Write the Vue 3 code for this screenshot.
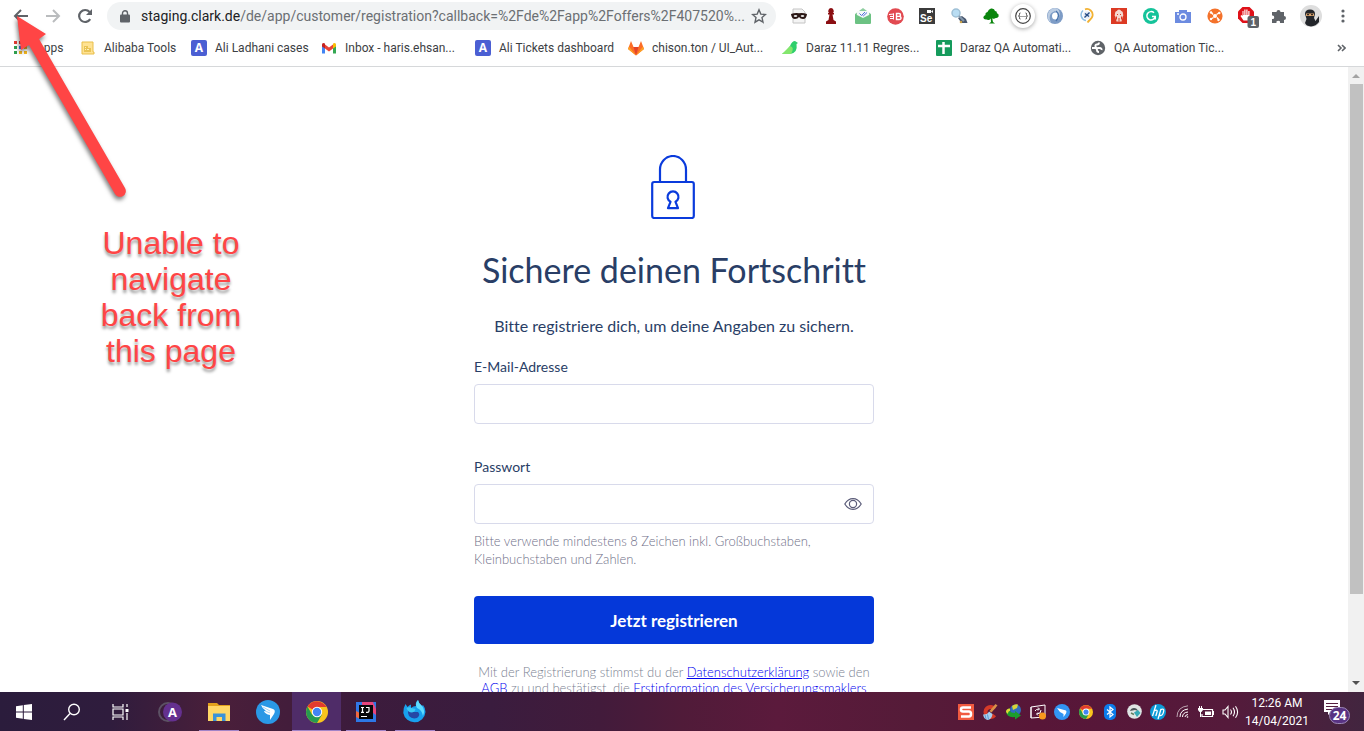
<script setup>
import { ref } from 'vue'

const url = ref('staging.clark.de/de/app/customer/registration?callback=%2Fde%2Fapp%2Foffers%2F407520%...')
const email = ref('')
const password = ref('')
const showPassword = ref(false)

const bookmarks = [
  { icon: 'apps', label: 'Apps' },
  { icon: 'folder', label: 'Alibaba Tools' },
  { icon: 'aqua', label: 'Ali Ladhani cases' },
  { icon: 'gmail', label: 'Inbox - haris.ehsan...' },
  { icon: 'aqua', label: 'Ali Tickets dashboard' },
  { icon: 'gitlab', label: 'chison.ton / UI_Aut...' },
  { icon: 'bird', label: 'Daraz 11.11 Regres...' },
  { icon: 'sheets', label: 'Daraz QA Automati...' },
  { icon: 'globe', label: 'QA Automation Tic...' },
]
</script>

<template>
  <div class="screen">
    <header class="browser">
      <div class="toolbar">
        <button class="slot" type="button" aria-label="Back">
          <svg width="16" height="16" viewBox="0 0 16 16"><path d="M15 8H2M8 2L2 8l6 6" fill="none" stroke="#5f6368" stroke-width="2" /></svg>
        </button>
        <button class="slot" type="button" aria-label="Forward">
          <svg width="16" height="16" viewBox="0 0 16 16"><path d="M1 8h13M8 2l6 6-6 6" fill="none" stroke="#babcbe" stroke-width="2" /></svg>
        </button>
        <button class="slot" type="button" aria-label="Reload">
          <svg width="16" height="16" viewBox="0 0 16 16"><path d="M13.2 11.2A6 6 0 1 1 12.6 4" fill="none" stroke="#5f6368" stroke-width="2.2" /><path d="M15 1v6H9z" fill="#5f6368" /></svg>
        </button>
        <div class="omnibox">
          <svg class="padlock" width="10" height="13" viewBox="0 0 10 13"><path d="M2.5 6V3.3a2.5 2.5 0 0 1 5 0V6" fill="none" stroke="#5f6368" stroke-width="1.4" /><rect y="4.6" width="10" height="8" rx="1" fill="#5f6368" /></svg>
          <div class="address">
            <span class="host">staging.clark.de</span><span>{{ url.slice(16) }}</span>
          </div>
          <button class="star" type="button" aria-label="Bookmark this page">
            <svg width="16" height="16" viewBox="0 0 16 16"><path d="M8 1.8l1.8 4.3 4.7.4-3.5 3.1 1 4.6L8 11.8l-4 2.4 1-4.6-3.500-3.100 4.700-.4z" fill="none" stroke="#5f6368" stroke-width="1.400" /></svg>
          </button>
        </div>
        <div class="extensions">
          <button class="slot" type="button" aria-label="Incognito">
            <svg width="16" height="16" viewBox="0 0 16 16"><path d="M2 1h9l3 3v11H2z" fill="#f4f4f4" stroke="#c4c4c4" /><path d="M0 6q4-1.500 8-.8 4-.7 8 .8-.5 5-4 5-2.800 0-4-2-1.200 2-4 2-3.500 0-4-5z" fill="#2b1715" /><ellipse cx="4.500" cy="8" rx="1.800" ry="1" fill="#e8e8e8" /><ellipse cx="11.500" cy="8" rx="1.800" ry="1" fill="#e8e8e8" /></svg>
          </button>
          <button class="slot" type="button" aria-label="Chess">
            <svg width="16" height="16" viewBox="0 0 16 16"><path d="M8 0a3 3 0 0 1 2 5h1v1.500H9.500L10.500 12 13 13.500V16H3v-2.500L5.500 12l1-5.500H5V5h1a3 3 0 0 1 2-5z" fill="#8b0e12" /></svg>
          </button>
          <button class="slot" type="button" aria-label="Mail tracker">
            <svg width="18" height="16" viewBox="0 0 18 16"><path d="M1 6l8-6 8 6v9H1z" fill="#8fcea0" /><path d="M3 3h12v6l-6 3-6-3z" fill="#f5faf7" /><path d="M1 6l8 4 8-4v8.500q0 1.500-1 1.500H2q-1 0-1-1.500z" fill="#6cc283" /><path d="M5.500 5.500l2 2 3.500-3.500M8.500 7l1 .8L13 4.500" fill="none" stroke="#536bdc" /></svg>
          </button>
          <button class="slot" type="button" aria-label="Block">
            <svg width="17" height="17" viewBox="0 0 17 17"><circle cx="8.500" cy="8.500" r="8.300" fill="#e24a51" /><path d="M2 6.500l5-.5M3 8.500h4M3 10.500h4M6.500 5.500v6" stroke="#fff" stroke-width="1" /><path d="M9.500 5.500h2.500q1.500 0 1.500 1.400T12 8.400q2 0 2 1.600t-2 1.500H9.500zM9.500 8.400H12" fill="none" stroke="#fff" stroke-width="1.400" /></svg>
          </button>
          <button class="slot" type="button" aria-label="Selenium">
            <svg width="16" height="16" viewBox="0 0 16 16"><rect width="16" height="16" fill="#3b3b3b" /><rect x="8" y="2" width="4" height="3" fill="#fff" /><path d="M12 3.500l2-1.500v3z" fill="#fff" /><text x="1" y="14" class="se">Se</text></svg>
          </button>
          <button class="slot" type="button" aria-label="Inspector">
            <svg width="18" height="16" viewBox="0 0 18 16"><path d="M8 10l4-2 4 3 1.500 4h-6z" fill="#48566d" /><circle cx="6" cy="5" r="4" fill="#b9ddf3" stroke="#9fc0d6" stroke-width="1.500" /><path d="M9 8l5 5" stroke="#8398ac" stroke-width="2" /><circle cx="11" cy="14" r="1.300" fill="#c8a14a" /></svg>
          </button>
          <button class="slot" type="button" aria-label="Tree">
            <svg width="16" height="16" viewBox="0 0 16 16"><path d="M8 .5q3.500-.5 4 2.500 2 0 2 2.300 2 .7 1.700 3-.7 2-3 1.700-1.500 1.500-3.500.3L10 14l2 1.500H6L8 14l-.3-3.500Q6 13 4 11.500.5 12 .3 9.500.5 7.500 2.500 7q-.5-2.500 2-3Q5.500 1 8 .5z" fill="#0a850d" /></svg>
          </button>
          <button class="slot" type="button" aria-label="JSON formatter">
            <svg width="28" height="28" viewBox="0 0 28 28" class="raised"><circle cx="14" cy="14" r="12" fill="#fff" /><circle cx="14" cy="14" r="7.300" fill="none" stroke="#444" stroke-width="1.200" /><path d="M11.500 11q-1.500 0-1 1.500 0 1.500-1 1.500 1 0 1 1.500-.5 1.500 1 1.500M16.500 11q1.500 0 1 1.500 0 1.500 1 1.500-1 0-1 1.500.5 1.500-1 1.500" fill="none" stroke="#444" /><path d="M11.500 14.500h5" stroke="#444" stroke-dasharray="1 1" /></svg>
          </button>
          <button class="slot" type="button" aria-label="JSON viewer">
            <svg width="16" height="16" viewBox="0 0 16 16"><circle cx="8" cy="8" r="8" fill="#7d9cc6" /><path d="M8 0a8 8 0 0 0-4 14.500Q0 6 8 3q5 4 2 9 5-6 1-11z" fill="#bccde3" /><circle cx="8.500" cy="8" r="3.500" fill="#fff" /><path d="M9 3q5 4 0 10" fill="none" stroke="#4b75ad" stroke-width="1.500" /></svg>
          </button>
          <button class="slot" type="button" aria-label="Page ruler">
            <svg width="14" height="16" viewBox="0 0 14 16"><path d="M3 2.500A5.800 5.800 0 0 0 6 12.500" fill="none" stroke="#8fbfe4" stroke-width="1.500" /><path d="M5 1.300A5.800 5.800 0 0 1 12.500 8c-.5 3-3 3.500-5 6.500" fill="none" stroke="#f2b233" stroke-width="1.800" /><circle cx="7" cy="7" r="3.800" fill="#e7eef6" /><path d="M4.500 9.500l5-5M5 5.500l4 3" stroke="#244c86" stroke-width="1.400" fill="none" /></svg>
          </button>
          <button class="slot" type="button" aria-label="Popcorn">
            <svg width="16" height="16" viewBox="0 0 16 16"><rect width="16" height="16" fill="#dc3a24" /><path d="M4 6q0-3 2-3 0-1.500 2-1.500T10 3q2 0 2 3 1 1-.5 3l-1 4.500h-5l-1-4.500Q3 7 4 6z" fill="#f5d9d0" /><path d="M5 8.500h1v3H5zM10 8.500h1v3h-1zM7.500 10h1v3.500h-1zM6 6h1v1H6zM9 6h1v1H9z" fill="#dc3a24" /></svg>
          </button>
          <button class="slot" type="button" aria-label="Grammarly">
            <svg width="16" height="16" viewBox="0 0 16 16"><circle cx="8" cy="8" r="8" fill="#15c39a" /><path d="M11 4.800a4.200 4.200 0 1 0 1.200 3.700H9M12.300 8.500v3" fill="none" stroke="#fff" stroke-width="1.500" /></svg>
          </button>
          <button class="slot" type="button" aria-label="Screenshot">
            <svg width="16" height="13" viewBox="0 0 16 13"><path d="M0 2h4V0h8v2h4v11H0z" fill="#6c8be0" /><circle cx="8" cy="7" r="3" fill="none" stroke="#fff" stroke-width="1.300" /><path d="M2 4h2" stroke="#fff" stroke-width="1.300" /></svg>
          </button>
          <button class="slot" type="button" aria-label="Hub">
            <svg width="16" height="16" viewBox="0 0 16 16"><circle cx="8" cy="8" r="7.600" fill="#f4722b" /><circle cx="8" cy="8" r="2" fill="#fff" /><path d="M4 4l2 2.500M9.500 6.500L12 5M12 12l-2-2.500M6.500 9.500L4 11" stroke="#fff" stroke-width="1.300" /><circle cx="4" cy="4.500" r="1.200" fill="#fff" /><circle cx="12.300" cy="5" r="1.200" fill="#fff" /><circle cx="11.500" cy="12" r="1.200" fill="#fff" /><circle cx="4" cy="11" r="1.200" fill="#fff" /></svg>
          </button>
          <button class="slot" type="button" aria-label="Ad blocker, 1 blocked">
            <svg width="24" height="24" viewBox="0 0 24 24"><path d="M7.500 3h7L19 7.500v7L14.500 19h-7L3 14.500v-7z" fill="#df1119" /><path d="M7.500 7v5l-1-1-1 1 3 4.500H13L14.500 13V7h-1.200v4h-.8V5.500h-1.200V11h-.8V5.500H9.300V11h-.8V7z" fill="#fff" /><rect x="12.500" y="12" width="11.500" height="12" rx="2" fill="#5f6368" /><text x="15.500" y="22" class="count">1</text></svg>
          </button>
          <button class="slot" type="button" aria-label="Extensions">
            <svg width="16" height="16" viewBox="0 0 16 16"><path d="M1 4h4.500a2 2 0 1 1 4 0H13v4a2 2 0 1 1 0 4v3H9a1.800 1.800 0 1 0-3.500 0H1v-4a1.800 1.800 0 1 0 0-3.500z" fill="#5f6368" /></svg>
          </button>
          <button class="slot" type="button" aria-label="Profile">
            <svg width="22" height="22" viewBox="0 0 22 22"><circle cx="11" cy="11" r="11" fill="#dedede" /><path d="M5 9q0-4.500 5-4.500T15 9l-1 4 1.500 3 3.500-5v6q-3 4-8 4.500-5-.5-6-3.500l1.500-4z" fill="#22252a" /><path d="M6 8.500h8V11H6z" fill="#d9a36d" /><path d="M7 9.700h2M11 9.700h2" stroke="#111" /></svg>
          </button>
          <button class="slot" type="button" aria-label="Menu">
            <svg width="4" height="14" viewBox="0 0 4 14"><circle cx="2" cy="2" r="1.600" fill="#5f6368" /><circle cx="2" cy="7" r="1.600" fill="#5f6368" /><circle cx="2" cy="12" r="1.600" fill="#5f6368" /></svg>
          </button>
        </div>
      </div>
      <nav class="bookmarks" aria-label="Bookmarks">
        <a v-for="(b, i) in bookmarks" :key="i" class="bookmark" href="#">
          <svg class="favicon" width="16" height="16" viewBox="0 0 16 16">
            <g v-if="b.icon === 'apps'">
              <path d="M2 1h3v3H2zM7 1h3v3H7zM12 1h3v3h-3z" fill="#e33b32" />
              <path d="M2 6h3v3H2zM2 11h3v3H2z" fill="#2f9f4f" />
              <path d="M7 6h3v3H7z" fill="#3b7ded" />
              <path d="M12 6h3v3h-3zM7 11h3v3H7zM12 11h3v3h-3z" fill="#f5b922" />
            </g>
            <g v-else-if="b.icon === 'folder'">
              <path d="M2 2h11v10h1v2H2z" fill="#ffe293" stroke="#e9bf4b" />
              <path d="M4 6h4v6H4zM8 8h3v4H8z" fill="#e9c456" /><path d="M5 7h1v1H5zM5 9h1v1H5zM7 9h2v1H7z" fill="#fff0bd" />
            </g>
            <g v-else-if="b.icon === 'aqua'">
              <rect width="16" height="16" rx="2" fill="#4b5fd3" />
              <text x="8" y="12" text-anchor="middle" class="letter">A</text>
            </g>
            <g v-else-if="b.icon === 'gmail'">
              <path d="M1 4v9.500h3V7z" fill="#4285f4" /><path d="M12 7v6.500h3V4z" fill="#34a853" />
              <path d="M4 4.500l4 3 4-3V8.500l-4 3-4-3z" fill="#ea4335" />
              <path d="M1 5q0-3 3-1.500V8.500L1 6.500z" fill="#c5221f" /><path d="M12 3.500q3-1.500 3 1.500v1.500l-3 2z" fill="#fbbc04" />
            </g>
            <g v-else-if="b.icon === 'gitlab'">
              <path d="M3 1l2.500 6h5L13 1l3 8-8 6.500L0 9z" fill="#fc6d26" />
              <path d="M5.500 7h5L8 15.500z" fill="#e24329" /><path d="M0 9l1-2.500L8 15.500zM16 9l-1-2.500L8 15.500z" fill="#fca326" />
            </g>
            <g v-else-if="b.icon === 'bird'">
              <path d="M8 6q2-5 5-5l3 2-1.500 1Q16 13 8 14H0q5-3 8-8z" fill="#2fcf6c" />
              <path d="M8 6q5 1 1 8H0z" fill="#83e66d" />
            </g>
            <g v-else-if="b.icon === 'sheets'">
              <rect width="16" height="16" rx="1" fill="#159b5c" /><path d="M2 6h12M7.500 2v12" stroke="#fff" stroke-width="2.500" />
            </g>
            <g v-else>
              <circle cx="8" cy="8" r="7.200" fill="#5f6368" /><path d="M9 2.500q0 2-2 2T5.500 6.500 8 8h2q2 .5 1.500 2M2 8h3q2 0 2 2t2 2" fill="none" stroke="#fff" stroke-width="1.900" />
            </g>
          </svg>
          <span>{{ b.label }}</span>
        </a>
        <button class="more" type="button" aria-label="More bookmarks">
          <svg width="9" height="8" viewBox="0 0 9 8"><path d="M1 1l3 3-3 3M5 1l3 3-3 3" fill="none" stroke="#5f6368" stroke-width="1.600" /></svg>
        </button>
      </nav>
    </header>

    <div class="viewport">
      <main class="page">
        <form class="register" @submit.prevent>
          <svg class="lock" width="44" height="64" viewBox="0 0 44 64" fill="none" stroke="#0a3bdc" stroke-width="2.200">
            <rect x="1.200" y="27" width="41.600" height="36" rx="2" />
            <path d="M9 27V14.500a13 13.500 0 0 1 26 0V27" />
            <path d="M19.500 46.800a5.500 5.500 0 1 1 5 0l2.500 6.400H17l2.500-6.400z" stroke-linejoin="round" />
          </svg>
          <h1>Sichere deinen Fortschritt</h1>
          <p class="intro">Bitte registriere dich, um deine Angaben zu sichern.</p>
          <div class="field">
            <label for="email">E-Mail-Adresse</label>
            <input id="email" v-model="email" type="email">
          </div>
          <div class="field">
            <label for="password">Passwort</label>
            <div class="password">
              <input id="password" v-model="password" :type="showPassword ? 'text' : 'password'" aria-describedby="hint">
              <button class="eye" type="button" aria-label="Passwort anzeigen" @click="showPassword = !showPassword">
                <svg width="18" height="12" viewBox="0 0 18 12" fill="none" stroke="#5a5b78" stroke-width="1.200"><path d="M.8 6Q4 .7 9 .7T17.200 6Q14 11.300 9 11.300T.8 6z" /><circle cx="9" cy="6" r="3.600" /></svg>
              </button>
            </div>
            <p id="hint" class="hint">Bitte verwende mindestens 8 Zeichen inkl. Großbuchstaben, Kleinbuchstaben und Zahlen.</p>
          </div>
          <button class="submit" type="submit">Jetzt registrieren</button>
          <p class="legal">Mit der Registrierung stimmst du der <a href="#">Datenschutzerklärung</a> sowie den<br><a href="#">AGB</a> zu und bestätigst, die <a href="#">Erstinformation des Versicherungsmaklers</a></p>
        </form>
      </main>
      <div class="scrollbar" aria-hidden="true">
        <svg width="16" height="17" viewBox="0 0 16 17"><path d="M4 11h8L8 7z" fill="#a3a3a3" /></svg>
        <div class="thumb"></div>
        <svg width="16" height="17" viewBox="0 0 16 17"><path d="M4 6h8l-4 4z" fill="#505050" /></svg>
      </div>
    </div>

    <footer class="taskbar">
      <button class="task first" type="button" aria-label="Start">
        <svg width="16" height="16" viewBox="0 0 16 16"><path d="M0 2.200L6.800 1.300V7.500H0zM7.800 1.100L16 0v7.500H7.800zM0 8.500h6.800v6.200L0 13.800zM7.800 8.500H16V16l-8.200-1.100z" fill="#fff" /></svg>
      </button>
      <button class="task" type="button" aria-label="Search">
        <svg width="18" height="18" viewBox="0 0 18 18" fill="none" stroke="#fff" stroke-width="1.400"><circle cx="11" cy="6.500" r="5.300" /><path d="M7 10.500L1 17" /></svg>
      </button>
      <button class="task" type="button" aria-label="Task view">
        <svg width="18" height="16" viewBox="0 0 18 16" fill="none" stroke="#fff" stroke-width="1.200"><path d="M1 0v3h10V0M1 16v-3h10v3M1 5h10v6H1zM15 0v3M15 9v7" /><path d="M13.500 5h3v3h-3z" fill="#fff" stroke="none" /></svg>
      </button>
      <button class="task" type="button" aria-label="App A">
        <svg width="24" height="20" viewBox="0 0 24 20"><circle cx="10" cy="10" r="9" fill="none" stroke="#5c5164" stroke-width="2" /><circle cx="14.500" cy="10" r="9.500" fill="#64308f" /><text x="14.500" y="15" text-anchor="middle" class="circle-letter">A</text></svg>
      </button>
      <button class="task open" type="button" aria-label="File Explorer">
        <svg width="22" height="18" viewBox="0 0 22 18"><path d="M0 0h9l2 2h11v16H0z" fill="#e2a11c" /><path d="M0 3h22v15H0z" fill="#ffd766" /><path d="M5 18v-7.500h12.500V18h-3.500v-4h-5.500v4z" fill="#3b93d9" /></svg>
      </button>
      <button class="task" type="button" aria-label="DingTalk">
        <svg width="24" height="24" viewBox="0 0 24 24"><circle cx="12" cy="12" r="12" fill="#2a98e6" /><path d="M5 5l12 4q3 1 1 5l-4 6v-5q-5-1-6-4 1 0 2 0Q6 8 5 5z" fill="#fff" /><path d="M7 7l7 4M9 11l5 2" stroke="#a8d5f4" /></svg>
      </button>
      <button class="task open active" type="button" aria-label="Chrome">
        <svg width="22" height="22" viewBox="0 0 22 22"><circle cx="11" cy="11" r="11" fill="#f9c51d" /><path d="M11 11L1.500 5.500A11 11 0 0 1 20.500 6H11z" fill="#e33b2e" /><path d="M1.500 5.500A11 11 0 0 0 11 22l5-8.500H6z" fill="#269b50" /><circle cx="11" cy="11" r="5.200" fill="#fff" /><circle cx="11" cy="11" r="4.200" fill="#4285f4" /></svg>
      </button>
      <button class="task open" type="button" aria-label="IntelliJ IDEA">
        <svg width="20" height="20" viewBox="0 0 20 20"><path d="M0 0h20v20H0z" fill="#2d78e6" /><path d="M4 0h13l3 7v6L10 6 3 3z" fill="#e8457c" /><path d="M0 0h6v6L0 9z" fill="#3178e8" /><path d="M0 9l4 2v6l-4-2z" fill="#f0683f" /><rect x="3" y="3" width="14" height="14" fill="#080808" /><path d="M5 5.500h3M6.500 5.500v4.500M5 10.300h3M10 5.500h3v3.500q0 1.300-1.500 1.300H10M5 14.500h6" stroke="#fff" stroke-width="1.200" fill="none" /></svg>
      </button>
      <button class="task open" type="button" aria-label="Firefox">
        <svg width="23" height="24" viewBox="0 0 23 24"><path d="M2.500 4l2 3Q6 5 8 4.500L8 8q2-2 5-2-1-3.500 2-6 .5 3.500 4 6l1-1q2.500 3 2.500 7A11.200 11.200 0 0 1 .3 13Q0 8 2.500 4z" fill="#18a0ee" /><path d="M15 0q.5 3.500 4 6 3.500 4 1 10-1-6-6-8-2.500-4 1-8z" fill="#5fdcff" /><path d="M5 10q2 2 5 2h5q3 3-1 6-5 1.500-8-2-1.500-3-1-6z" fill="#2547a5" /><path d="M3.500 8q3-1.500 5 0l4 1q-.5 3-3.500 3.500-4 0-5.500-4.500z" fill="#3cc7f4" /></svg>
      </button>

      <div class="tray">
        <button class="tray-icon" type="button" aria-label="Snagit">
          <svg width="16" height="16" viewBox="0 0 16 16"><rect width="16" height="16" fill="#f15a40" /><path d="M13 3.500H5q-2 0-2 2t2 2h6q2 0 2 2.500t-2 2.500H3" fill="none" stroke="#fff" stroke-width="2.500" /></svg>
        </button>
        <button class="tray-icon" type="button" aria-label="CCleaner">
          <svg width="16" height="16" viewBox="0 0 16 16"><path d="M12.500 5A5 5 0 1 0 12.500 11" fill="none" stroke="#d63a28" stroke-width="4" /><path d="M13.500 0l2 1.500-6 7-2-1.500z" fill="#d89149" /><path d="M1 10.500q4.500.5 6-3l3.500 2.500q-.5 5-4.500 6-4-.5-5-5.500z" fill="#a9d0ee" /><path d="M3 11l1 4M5.500 10.500l1 5" stroke="#5c9ad2" /></svg>
        </button>
        <button class="tray-icon" type="button" aria-label="Download manager">
          <svg width="16" height="16" viewBox="0 0 16 16"><circle cx="9.500" cy="6" r="5.500" fill="#2f6fbd" /><path d="M6 2q3-2.500 6-1.500L11 4 7 6z" fill="#d8d437" /><path d="M0 8q0-3.500 4-3.500Q3 9 9 9V7l6 4.500-6 4V13Q1 14 0 8z" fill="#1c9e2c" /><path d="M0 8q0-3.500 4-3.500v2.500q-2 0-2 3z" fill="#e1d637" /></svg>
        </button>
        <button class="tray-icon" type="button" aria-label="Display">
          <svg width="17" height="16" viewBox="0 0 17 16"><path d="M1 3l14-2v12L1 14zM1 3v11" fill="none" stroke="#fff" /><path d="M5 7q1-2 4-2M11 6q0 4-4 4M8 3.500l1.500 1.500L8 6.500M8 8.500L6.500 10 8 11.500" fill="none" stroke="#fff" /><circle cx="12.500" cy="12" r="3.500" fill="#f79a1d" /></svg>
        </button>
        <button class="tray-icon" type="button" aria-label="DingTalk">
          <svg width="16" height="16" viewBox="0 0 16 16"><circle cx="8" cy="8" r="8" fill="#3295f3" /><path d="M3 4l9 2.500q1 1 0 3L9.500 13V10Q5 8 3 4z" fill="#fff" /></svg>
        </button>
        <button class="tray-icon" type="button" aria-label="Chrome">
          <svg width="14" height="14" viewBox="0 0 22 22"><circle cx="11" cy="11" r="11" fill="#f9c51d" /><path d="M11 11L1.500 5.500A11 11 0 0 1 20.500 6H11z" fill="#e33b2e" /><path d="M1.500 5.500A11 11 0 0 0 11 22l5-8.500H6z" fill="#269b50" /><circle cx="11" cy="11" r="5.500" fill="#fff" /><circle cx="11" cy="11" r="4" fill="#4285f4" /></svg>
        </button>
        <button class="tray-icon" type="button" aria-label="Bluetooth">
          <svg width="12" height="16" viewBox="0 0 12 16"><rect width="12" height="16" rx="5" fill="#0b7ceb" /><path d="M3 5.500l6 5L6 13V3l3 2.500-6 5" fill="none" stroke="#fff" stroke-width="1.200" /></svg>
        </button>
        <button class="tray-icon" type="button" aria-label="Cloud">
          <svg width="15" height="15" viewBox="0 0 15 15"><circle cx="7.500" cy="7.500" r="7.300" fill="#dfe5e4" /><path d="M3 7q1-3 4-3 3 0 4 3l-3-1z" fill="#4a5558" /><path d="M7 8.500L11 6l2.500 3-3.500 4z" fill="#35a9b5" /><path d="M4 9l3 1.500" stroke="#5f7f60" stroke-width="1.500" /></svg>
        </button>
        <button class="tray-icon" type="button" aria-label="HP">
          <svg width="16" height="16" viewBox="0 0 16 16"><circle cx="8" cy="8" r="8" fill="#0b9bd7" /><path d="M6 1L2.500 12M4 7q4-2 3 1l-1.200 4M11 5L8 15M10.500 5.600q4-1.400 3.200 1.400-.7 4.500-3.200 4.500h-1" fill="none" stroke="#fff" stroke-width="1.300" /></svg>
        </button>
        <button class="tray-icon" type="button" aria-label="Network">
          <svg width="13" height="13" viewBox="0 0 13 13" fill="none" stroke="#fff"><path d="M1 12Q1 2 12 .8" opacity=".6" /><path d="M4 12q0-7 8-8" /><path d="M6.500 12q0-4.500 5.500-5" /><path d="M9 12q0-2 3-2.500" /><circle cx="11.500" cy="12" r=".8" fill="#fff" stroke="none" /></svg>
        </button>
        <button class="tray-icon" type="button" aria-label="Battery">
          <svg width="16" height="12" viewBox="0 0 16 12"><path d="M5 3.500h9.500v7H4V8M14.500 5.500h1v3h-1" fill="none" stroke="#fff" stroke-width="1.200" /><path d="M7 5.500h6v3.500H7zM0 2h5v2L3.500 6h-2L0 4z" fill="#fff" /><path d="M1.500 0v2M3.500 0v2M2.500 6v5" stroke="#fff" /></svg>
        </button>
        <button class="tray-icon" type="button" aria-label="Volume">
          <svg width="17" height="14" viewBox="0 0 17 14" fill="none" stroke="#fff" stroke-width="1.100"><path d="M1 5h2l3-3.500v11L3 9H1zM8.500 4.500q2 2.500 0 5M11 2.800q3 4.200 0 8.400M13.500 1.200q4.200 5.800 0 11.600" /></svg>
        </button>
        <div class="clock"><time>12:26 AM</time><time>14/04/2021</time></div>
        <button class="notify" type="button" aria-label="24 notifications">
          <svg width="30" height="26" viewBox="0 0 30 26"><path d="M2 1h16v12H9l-3 3v-3H2z" fill="#fff" /><path d="M4 4.500h12M4 7.500h12M4 10.500h7" stroke="#57203f" /><rect x="7.500" y="8.500" width="20" height="16" rx="8" fill="#593383" stroke="#9c87b4" /><text x="17.500" y="21" text-anchor="middle" class="badge">24</text></svg>
        </button>
      </div>
    </footer>

    <svg class="arrow" width="140" height="210" viewBox="0 0 140 210" aria-hidden="true">
      <path d="M17 16l29 18-7 5 86 149a5.500 5.500 0 0 1-10 6L29 45l-8 5z" fill="#ff4545" />
    </svg>
    <p class="note">Unable to navigate back from this page</p>
  </div>
</template>

<style>
html, body { overflow: hidden; }
</style>

<style scoped>
* { box-sizing: border-box; }
.screen { position: relative; display: flex; flex-direction: column; height: 100vh; background: #fff; font-family: Roboto, "Open Sans", sans-serif; font-size: 12px; color: #3c4043; }
button { margin: 0; padding: 0; border: 0; background: none; font: inherit; }
svg { display: block; flex: none; }
.browser { flex: none; border-bottom: 1px solid #d6d8da; }
.toolbar { display: flex; align-items: center; height: 32px; padding: 0 5px; }
.slot { display: flex; flex: none; align-items: center; justify-content: center; width: 32px; height: 32px; }
.omnibox { display: flex; flex: 1; align-items: center; min-width: 0; height: 28px; margin: 0 7px 0 6px; padding: 0 9px 0 13px; border-radius: 14px; background: #f1f3f4; }
.address { flex: 1; min-width: 0; margin-left: 11px; overflow: hidden; color: #6b6f73; font-size: 14px; line-height: 20px; white-space: nowrap; }
.host { color: #202124; }
.star { flex: none; }
.extensions { display: flex; flex: none; }
.raised { filter: drop-shadow(0 1px 2px rgba(0, 0, 0, 0.35)); }
.se { fill: #fff; font: bold 10px "Liberation Sans", sans-serif; }
.count { fill: #fff; font: bold 10px "Liberation Sans", sans-serif; }
.bookmarks { display: grid; grid-template-columns: 68px 111px 130px 154px 153px 154px 154px 154px 1fr auto; align-items: center; height: 34px; padding: 0 18px 2px 12px; }
.bookmark { display: flex; align-items: center; gap: 8px; color: #3c4043; line-height: 16px; text-decoration: none; white-space: nowrap; }
.letter { fill: #fff; font: bold 12px "Open Sans", sans-serif; }
.viewport { display: flex; flex: 1; min-height: 0; }
.page { flex: 1; overflow: hidden; padding-top: 88px; color: #293e66; font-family: Lato, sans-serif; font-variant-ligatures: none; }
.register { display: flex; flex-direction: column; width: 400px; margin: 0 auto; }
.lock { align-self: center; margin-right: 2px; }
h1 { margin: 31px 0 24px; font-size: 34px; font-weight: 400; line-height: 40px; text-align: center; white-space: nowrap; }
.intro { margin: 0 0 19px; font-size: 16px; line-height: 24px; text-align: center; }
.field + .field { margin-top: 33px; }
label { display: block; margin-bottom: 7px; font-size: 14px; line-height: 20px; }
input { display: block; width: 100%; height: 40px; padding: 0 12px; border: 1px solid #d8daeb; border-radius: 4px; background: #fff; font: inherit; }
.password { position: relative; }
.eye { position: absolute; top: 14px; right: 12px; }
.hint { margin: 8px 0 0; color: #6f6f88; font-size: 13px; font-weight: 300; line-height: 18px; }
.submit { height: 48px; margin-top: 28px; border-radius: 4px; background: #0538d9; color: #fff; font-size: 17px; font-weight: 700; }
.legal { margin: 20px 0 0; color: #7a8292; font-size: 13px; font-weight: 300; line-height: 16px; text-align: center; white-space: nowrap; }
.legal a { color: #0000ee; }
.scrollbar { display: flex; flex: none; flex-direction: column; width: 16px; background: #f1f1f1; }
.thumb { height: 510px; margin: 0 1px auto 2px; background: #c1c1c1; }
.taskbar { display: flex; flex: none; height: 39px; background: linear-gradient(90deg, #2b1c3c 0%, #2f1c3d 8%, #4a1f3a 16%, #3c1b3c 26%, #3a1c3e 36%, #421b3b 44%, #501b39 50%, #5b1a3c 57%, #551b38 67%, #581638 76%, #551a3b 90%, #42253f 100%); color: #fff; }
.task { display: flex; align-items: center; justify-content: center; width: 49px; }
.task.first { width: 47px; }
.task.open { background: linear-gradient(#a284c8, #a284c8) 50% 100% / 40px 1px no-repeat; }
.task.open.active { background: #4f2c68; box-shadow: inset 0 -1px #a284c8; }
.circle-letter { fill: #fff; font: 700 13px "Open Sans", sans-serif; }
.tray { display: flex; align-items: center; margin-left: auto; padding-right: 12px; }
.tray-icon { display: flex; flex: none; align-items: center; justify-content: center; width: 24px; height: 38px; }
.clock { display: flex; flex-direction: column; align-items: center; width: 70px; font-size: 12px; line-height: 18px; }
.notify { margin-left: 10px; }
.badge { fill: #fff; font: 700 12px "Open Sans", sans-serif; }
.arrow { position: absolute; top: 0; left: 0; filter: drop-shadow(-1px 3px 2px rgba(0, 0, 0, 0.5)); pointer-events: none; }
.note { position: absolute; top: 225px; left: 96px; width: 150px; margin: 0; color: #ff4545; font-family: "Liberation Sans", sans-serif; font-size: 32px; line-height: 36px; text-align: center; text-shadow: 0 3px 3px rgba(0, 0, 0, 0.4); }
</style>
